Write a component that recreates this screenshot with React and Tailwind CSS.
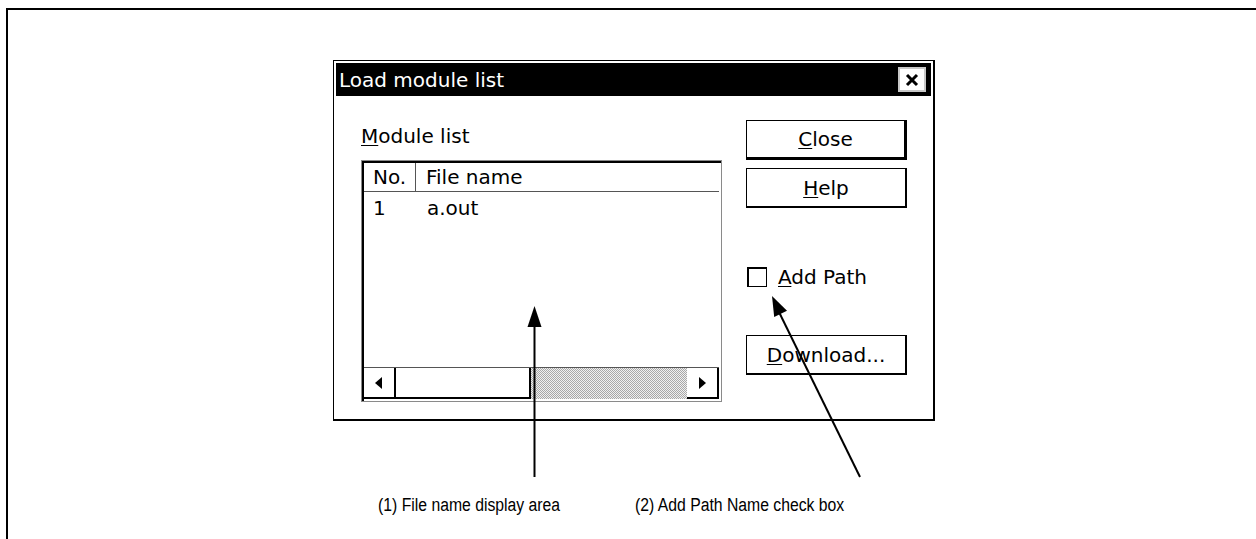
const U = ({ children }) => (
  <span className="underline underline-offset-2 decoration-1">{children}</span>
);

const WinButton = ({ children, heavy }) => (
  <div
    className={
      "w-[161px] h-[40px] flex items-center justify-center bg-white border-black border-l border-t " +
      (heavy ? "border-r-[3px] border-b-[3px]" : "border-r-2 border-b-2")
    }
  >
    <span className="text-[20px] leading-none">{children}</span>
  </div>
);

const ScrollArrow = ({ dir }) => (
  <div className="w-[32px] h-full flex items-center justify-center bg-white border-r-2 border-b-2 border-black">
    <svg width="8" height="12" viewBox="0 0 8 12">
      {dir === "left" ? (
        <polygon points="7,0 7,12 0,6" fill="black" />
      ) : (
        <polygon points="1,0 1,12 8,6" fill="black" />
      )}
    </svg>
  </div>
);

export default function App() {
  return (
    <div className="w-[1256px] h-[539px] bg-white overflow-hidden pl-[6px] pt-[8px] font-['DejaVu_Sans',sans-serif] text-black">
      <div className="relative w-[1300px] h-[600px] border-l-2 border-t-2 border-black">
        {/* dialog */}
        <div className="ml-[325px] mt-[50px] w-[602px] h-[361px] border-l border-t border-r-2 border-b-2 border-black p-[2px] flex flex-col">
          <div className="h-[33px] bg-black flex items-center justify-between pl-[3px] pr-[5px]">
            <span className="text-white text-[20px] leading-none">Load module list</span>
            <div className="w-[28px] h-[25px] bg-white border-2 border-[#c8c8c8] flex items-center justify-center">
              <svg width="14" height="14" viewBox="0 0 14 14">
                <path d="M2 2 L12 12 M12 2 L2 12" stroke="black" strokeWidth="3" />
              </svg>
            </div>
          </div>

          <div className="flex pl-[25px]">
            {/* left column */}
            <div className="w-[361px] pt-[28px] flex flex-col">
              <div className="text-[20px] leading-[24px]">
                <U>M</U>odule list
              </div>
              <div className="mt-[12px] h-[242px] border border-[#8a8a8a]">
                <div className="h-full border-l-2 border-t-2 border-black flex flex-col">
                  <div className="h-[29px] flex border-b border-[#555] text-[20px] mr-[2px]">
                    <div className="w-[52px] border-r border-[#555] pl-[9px] flex items-center">No.</div>
                    <div className="pl-[10px] flex items-center">File name</div>
                  </div>
                  <div className="h-[31px] flex items-center text-[20px]">
                    <div className="w-[53px] pl-[9px]">1</div>
                    <div className="pl-[10px]">a.out</div>
                  </div>
                  <div className="flex-1" />
                  <div className="h-[32px] flex border-t border-[#555] mr-[2px] mb-[2px]">
                    <ScrollArrow dir="left" />
                    <div className="w-[135px] bg-white border-r-2 border-b-2 border-black" />
                    <div className="flex-1 bg-[repeating-conic-gradient(#a8a8a8_0_25%,#f0f0f0_0_50%)] bg-[length:2px_2px]" />
                    <ScrollArrow dir="right" />
                  </div>
                </div>
              </div>
            </div>

            {/* right column */}
            <div className="ml-[24px] pt-[24px] flex flex-col">
              <WinButton heavy>
                <U>C</U>lose
              </WinButton>
              <div className="mt-[8px]">
                <WinButton>
                  <U>H</U>elp
                </WinButton>
              </div>
              <div className="mt-[59px] h-[20px] flex items-center pl-[1px]">
                <div className="w-[20px] h-[20px] border-l-2 border-t-2 border-r border-b border-black bg-white" />
                <span className="ml-[11px] text-[20px] leading-none">
                  <U>A</U>dd Path
                </span>
              </div>
              <div className="mt-[48px]">
                <WinButton>
                  <U>D</U>ownload...
                </WinButton>
              </div>
            </div>
          </div>
        </div>

        {/* captions */}
        <div className="mt-[74px] ml-[370px] flex font-['Liberation_Sans',Arial,sans-serif] text-[18px] leading-[20px]">
          <div className="w-[257px]">
            <div className="origin-left scale-x-[0.875] whitespace-nowrap">(1) File name display area</div>
          </div>
          <div>
            <div className="origin-left scale-x-[0.875] whitespace-nowrap">(2) Add Path Name check box</div>
          </div>
        </div>

        {/* callout arrows */}
        <svg className="absolute left-[-8px] top-[-10px]" width="1256" height="539" viewBox="0 0 1256 539">
          <line x1="534.5" y1="325" x2="534.5" y2="477" stroke="black" strokeWidth="2" />
          <polygon points="534.5,306 527.5,327 541.5,327" fill="black" />
          <line x1="778" y1="310" x2="860" y2="477" stroke="black" strokeWidth="2" />
          <polygon points="772,296 787,310.8 774.2,317" fill="black" />
        </svg>
      </div>
    </div>
  );
}
